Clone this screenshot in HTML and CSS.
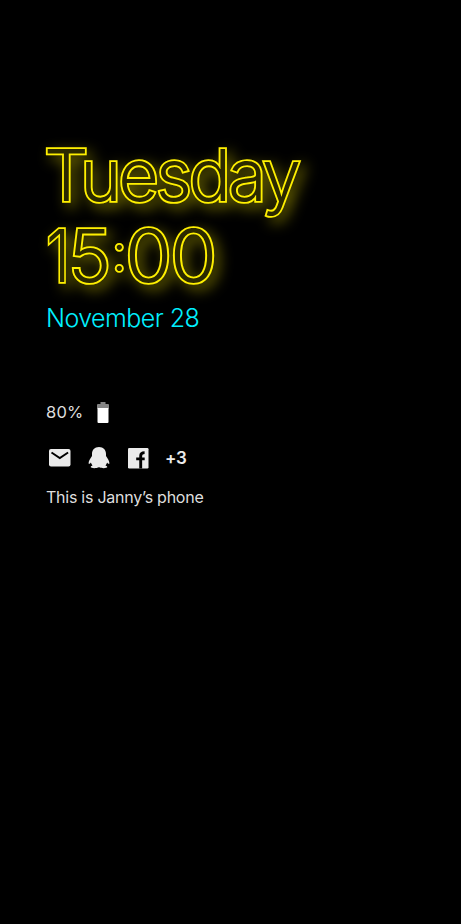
FILE: index.html
```html
<!DOCTYPE html>
<html lang="en">
<head>
<meta charset="utf-8">
<title>Always-on display</title>
<link rel="stylesheet" href="styles.css">
</head>
<body>
<main class="display">
  <div class="clock">
    <div class="neon day">Tuesday</div>
    <div class="neon time"><span class="one">1</span>5<span class="colon">:</span><span class="zeros">00</span></div>
  </div>
  <div class="date">November 28</div>
  <div class="battery">
    <span class="percent">80%</span>
    <svg class="cell" width="12" height="22" viewBox="0 0 12 22"><path fill="#858585" d="M3.500 0h5v2H11a1 1 0 0 1 1 1v3.500H0V3a1 1 0 0 1 1-1h2.500z"/><path fill="#fff" d="M.5 6h11v14a1 1 0 0 1-1 1h-9a1 1 0 0 1-1-1z"/></svg>
  </div>
  <div class="notifications">
    <svg width="22" height="18" viewBox="0 0 22 18"><rect width="21.500" height="17.500" rx="2" fill="#ebebeb"/><path d="M2.500 3.500l8.300 5.500 8.300-5.500" fill="none" stroke="#000" stroke-width="1.900"/></svg>
    <svg width="22" height="22" viewBox="0 0 22 22"><path fill="#ebebeb" d="M11 0C6.500 0 4 3 4 7v2C2.500 11 .7 13.800.6 16c0 1.300.8 1.400 2.300-.5.3 1.200.8 2.100 1.600 2.900-1.600.5-1.900 1.200-1.700 1.900.3 1 5.600 1.200 8.200 0 2.600 1.200 7.900 1 8.200 0 .2-.7-.1-1.400-1.700-1.900.8-.8 1.300-1.700 1.600-2.900 1.500 1.900 2.300 1.800 2.300.5-.1-2.200-1.900-5-3.400-7V7c0-4-2.500-7-7-7z"/></svg>
    <svg class="facebook" width="21" height="21" viewBox="0 0 21 21"><rect width="20.500" height="20.500" rx="1.200" fill="#ebebeb"/><path d="M12.700 20.500v-8.200M8.200 10.900h8.500M12.700 11V7.800c0-2.200 1.100-3.200 3.900-3.200" fill="none" stroke="#000" stroke-width="2.900"/></svg>
    <span class="more">+3</span>
  </div>
  <div class="owner">This is Janny’s phone</div>
</main>
</body>
</html>
```
FILE: styles.css
```css
body {
  margin: 0;
  background: #000;
  font-family: Inter, "Liberation Sans", sans-serif;
}
.display {
  box-sizing: border-box;
  height: 924px;
  padding: 134px 0 0 46px;
  overflow: hidden;
}
.neon {
  height: 81px;
  font-size: 73px;
  font-weight: 300;
  line-height: 81px;
  white-space: nowrap;
  color: #2b2900;
  -webkit-text-stroke: 3.700px #fff000;
  paint-order: stroke fill;
  filter: drop-shadow(5px 5px 7px rgba(255, 240, 0, .42));
}
.day {
  margin-left: -2px;
  font-size: 72px;
  letter-spacing: -3.300px;
  transform: scaleX(.975);
  transform-origin: left;
}
.time {
  letter-spacing: -2px;
  font-kerning: none;
}
.one {
  display: inline-block;
  width: 22px;
  transform: scaleX(.84);
  transform-origin: left;
}
.zeros {
  display: inline-block;
  transform: scaleX(1.045);
  transform-origin: left;
}
.colon {
  margin: 0 1px 0 3px;
  font-size: 50px;
  line-height: 0;
  vertical-align: 11px;
}
.date {
  margin-top: 6px;
  height: 32px;
  font-size: 25px;
  font-weight: 300;
  line-height: 32px;
  letter-spacing: -.55px;
  color: #00f0ff;
}
.battery {
  display: flex;
  align-items: center;
  gap: 14px;
  height: 24px;
  margin-top: 67px;
}
.percent, .owner {
  position: relative;
  top: -1px;
  font-size: 16px;
  line-height: 20px;
  letter-spacing: -.25px;
  color: #dedede;
}
.percent {
  width: 37px;
  font-size: 16.500px;
  letter-spacing: .2px;
}
.notifications {
  display: flex;
  align-items: center;
  height: 22px;
  margin: 22px 0 19px 3px;
  gap: 17px;
}
.facebook { margin: 0 -1px 0 1px; }
.more {
  font-size: 17px;
  font-weight: 600;
  letter-spacing: -.3px;
  color: #ebebeb;
}
```
